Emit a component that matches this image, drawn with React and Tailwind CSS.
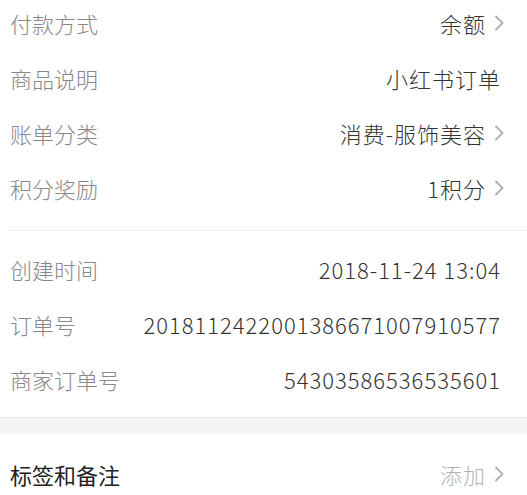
import React from 'react';

const Chevron = () => (
  <svg width="10" height="16" viewBox="0 0 10 16" className="ml-[8px] shrink-0">
    <path d="M2 1.5 L8.5 8 L2 14.5" fill="none" stroke="#b0b0b0" strokeWidth="1.9" strokeLinecap="round" strokeLinejoin="round" />
  </svg>
);

const Row = ({ label, value, arrow, labelClass = 'text-[#888888]', valueClass = 'text-[#333333]' }) => (
  <div className="flex items-center justify-between h-[55px] pl-[10px] pr-[23px]">
    <span className={labelClass}>{label}</span>
    <div className="flex items-center">
      <span className={`tracking-[1px] ${valueClass} ${arrow ? '' : 'mr-[3px]'}`}>{value}</span>
      {arrow && <Chevron />}
    </div>
  </div>
);

const App = () => {
  const top = [
    { label: '付款方式', value: '余额', arrow: true },
    { label: '商品说明', value: '小红书订单' },
    { label: '账单分类', value: '消费-服饰美容', arrow: true },
    { label: '积分奖励', value: '1积分', arrow: true },
  ];

  const info = [
    { label: '创建时间', value: '2018-11-24 13:04' },
    { label: '订单号', value: '2018112422001386671007910577' },
    { label: '商家订单号', value: '54303586536535601' },
  ];

  return (
    <div
      className="w-[527px] h-[495px] overflow-hidden bg-white text-[22px] leading-none font-light"
      style={{ fontFamily: '"Noto Sans CJK SC", "Noto Sans", sans-serif' }}
    >
      <div className="-mt-[5px] pb-[15px]">
        {top.map((r) => (
          <Row key={r.label} {...r} />
        ))}
      </div>
      <div className="ml-[8px] border-t border-[#ececec]" />
      <div className="pt-[10px] pb-[11px]">
        {info.map((r) => (
          <Row key={r.label} {...r} />
        ))}
      </div>
      <div className="h-[17px] bg-[#f5f5f5] border-t border-[#ececec]" />
      <div className="pt-[12px]">
        <Row label="标签和备注" value="添加" arrow labelClass="text-[#222222] font-normal" valueClass="text-[#b3b3b3]" />
      </div>
    </div>
  );
};

export default App;
